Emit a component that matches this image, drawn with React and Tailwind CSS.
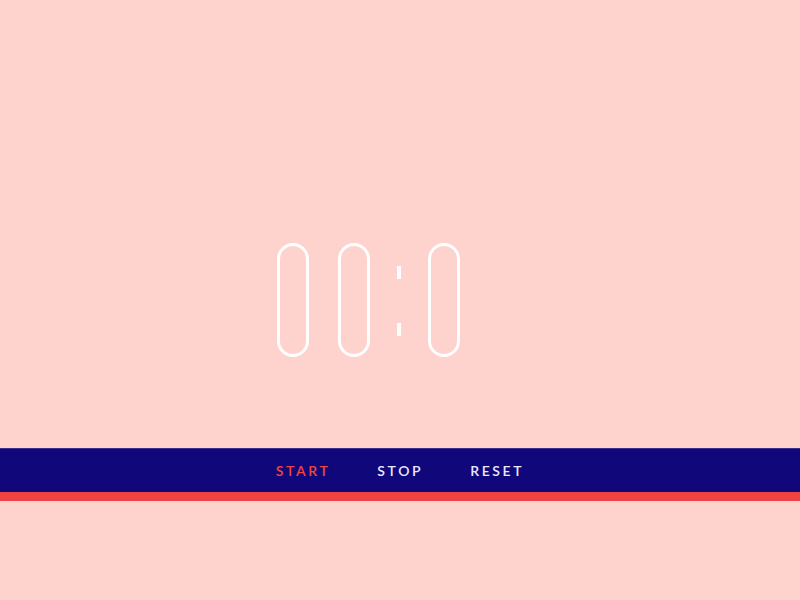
export default function App() {
  const pill = "w-[32px] h-[114px] rounded-full border-[3px] border-white box-border";
  return (
    <div className="w-full h-[600px] bg-[#ffd3cd] overflow-hidden" style={{ fontFamily: "Lato, 'Open Sans', sans-serif" }}>
      <div className="pt-[243px] pl-[277px] flex items-start">
        <div className={pill}></div>
        <div className={pill + " ml-[29px]"}></div>
        <div className="ml-[27px] w-[4px] h-[114px] flex flex-col">
          <div className="mt-[23px] h-[13px] w-[4px] bg-white"></div>
          <div className="mt-[44px] h-[13px] w-[4px] bg-white"></div>
        </div>
        <div className={pill + " ml-[27px]"}></div>
      </div>
      <div className="mt-[91px] h-[44px] bg-[#10077a] border-t border-[#3a2f8f] flex items-center justify-center gap-[47px] text-[14px] tracking-[2.6px] font-semibold">
        <span className="text-[#f0453f]">START</span>
        <span className="text-[#ece8ff]">STOP</span>
        <span className="text-[#ece8ff]">RESET</span>
      </div>
      <div className="h-[9px] bg-[#f04240]"></div>
    </div>
  );
}
